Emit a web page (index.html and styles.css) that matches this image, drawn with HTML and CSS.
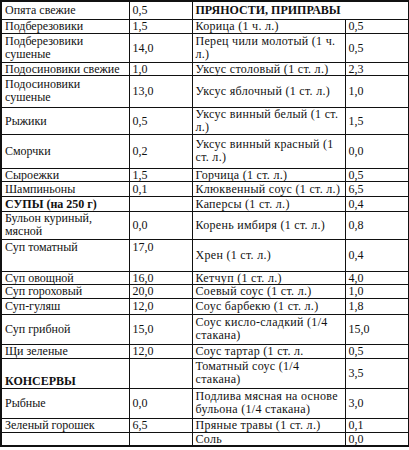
FILE: index.html
```html
<!DOCTYPE html>
<html lang="ru">
<head>
<meta charset="utf-8">
<link rel="stylesheet" href="styles.css">
</head>
<body>
<table class="carbs">
<colgroup>
<col class="c-name"><col class="c-val"><col class="c-name2"><col class="c-val2">
</colgroup>
<tr class="h18"><td>Опята свежие</td><td>0,5</td><td colspan="2" class="b">ПРЯНОСТИ, ПРИПРАВЫ</td></tr>
<tr class="h14"><td>Подберезовики</td><td>1,5</td><td class="sp">Корица (1 ч. л.)</td><td>0,5</td></tr>
<tr class="h29"><td class="two">Подберезовики<br>сушеные</td><td>14,0</td><td class="sp two">Перец чили молотый (1 ч.<br>л.)</td><td>0,5</td></tr>
<tr class="h13"><td>Подосиновики свежие</td><td>1,0</td><td class="sp">Уксус столовый (1 ст. л.)</td><td>2,3</td></tr>
<tr class="h32"><td class="two">Подосиновики<br>сушеные</td><td>13,0</td><td class="sp">Уксус яблочный (1 ст. л.)</td><td>1,0</td></tr>
<tr class="h27"><td>Рыжики</td><td>0,5</td><td class="sp two">Уксус винный белый (1 ст.<br>л.)</td><td>1,5</td></tr>
<tr class="h34"><td>Сморчки</td><td>0,2</td><td class="sp two">Уксус винный красный (1<br>ст. л.)</td><td>0,0</td></tr>
<tr class="h13"><td>Сыроежки</td><td>1,5</td><td class="sp">Горчица (1 ст. л.)</td><td>0,5</td></tr>
<tr class="h15"><td>Шампиньоны</td><td>0,1</td><td class="sp">Клюквенный соус (1 ст. л.)</td><td>6,5</td></tr>
<tr class="h15"><td class="b">СУПЫ (на 250 г)</td><td></td><td class="sp">Каперсы (1 ст. л.)</td><td>0,4</td></tr>
<tr class="h28"><td class="two">Бульон куриный,<br>мясной</td><td>0,0</td><td class="sp">Корень имбиря (1 ст. л.)</td><td>0,8</td></tr>
<tr class="h32"><td class="top">Суп томатный</td><td class="top">17,0</td><td class="sp">Хрен (1 ст. л.)</td><td>0,4</td></tr>
<tr class="h13"><td>Суп овощной</td><td>16,0</td><td class="sp">Кетчуп (1 ст. л.)</td><td>4,0</td></tr>
<tr class="h14"><td>Суп гороховый</td><td>20,0</td><td class="sp">Соевый соус (1 ст. л.)</td><td>1,0</td></tr>
<tr class="h16"><td>Суп-гуляш</td><td>12,0</td><td class="sp">Соус барбекю (1 ст. л.)</td><td>1,8</td></tr>
<tr class="h30"><td>Суп грибной</td><td>15,0</td><td class="sp two">Соус кисло-сладкий (1/4<br>стакана)</td><td>15,0</td></tr>
<tr class="h14"><td>Щи зеленые</td><td>12,0</td><td class="sp">Соус тартар (1 ст. л.</td><td>0,5</td></tr>
<tr class="h30"><td class="b bottom">КОНСЕРВЫ</td><td></td><td class="sp two">Томатный соус (1/4<br>стакана)</td><td>3,5</td></tr>
<tr class="h30"><td>Рыбные</td><td>0,0</td><td class="sp two">Подлива мясная на основе<br>бульона (1/4 стакана)</td><td>3,0</td></tr>
<tr class="h14"><td>Зеленый горошек</td><td>6,5</td><td class="sp">Пряные травы (1 ст. л.)</td><td>0,1</td></tr>
<tr class="h14"><td></td><td></td><td class="sp">Соль</td><td>0,0</td></tr>
</table>
</body>
</html>
```
FILE: styles.css
```css
html, body {
  margin: 0;
  padding: 0;
  background: #fff;
}

.carbs {
  border-collapse: collapse;
  table-layout: fixed;
  width: 408px;
  border: 2px solid #111;
  font-family: "Liberation Serif", "Times New Roman", serif;
  font-size: 12px;
  line-height: 12px;
  color: #111;
}

.c-name { width: 128px; }
.c-val { width: 63px; }
.c-name2 { width: 153px; }
.c-val2 { width: 64px; }

.carbs td {
  border: 1px solid #111;
  padding: 0 2px 0 3px;
  vertical-align: middle;
  white-space: nowrap;
  overflow: hidden;
}

.carbs td.two { line-height: 13px; }
.carbs td.sp { letter-spacing: 0.3px; }
.carbs td.b { font-weight: bold; }
.carbs td.top { vertical-align: top; padding-top: 1px; }
.carbs td.bottom { vertical-align: bottom; padding-bottom: 1px; }

.h13 { height: 13px; }
.h14 { height: 14px; }
.h15 { height: 15px; }
.h16 { height: 16px; }
.h18 { height: 18px; }
.h27 { height: 27px; }
.h28 { height: 28px; }
.h29 { height: 29px; }
.h30 { height: 30px; }
.h32 { height: 32px; }
.h34 { height: 34px; }
```
